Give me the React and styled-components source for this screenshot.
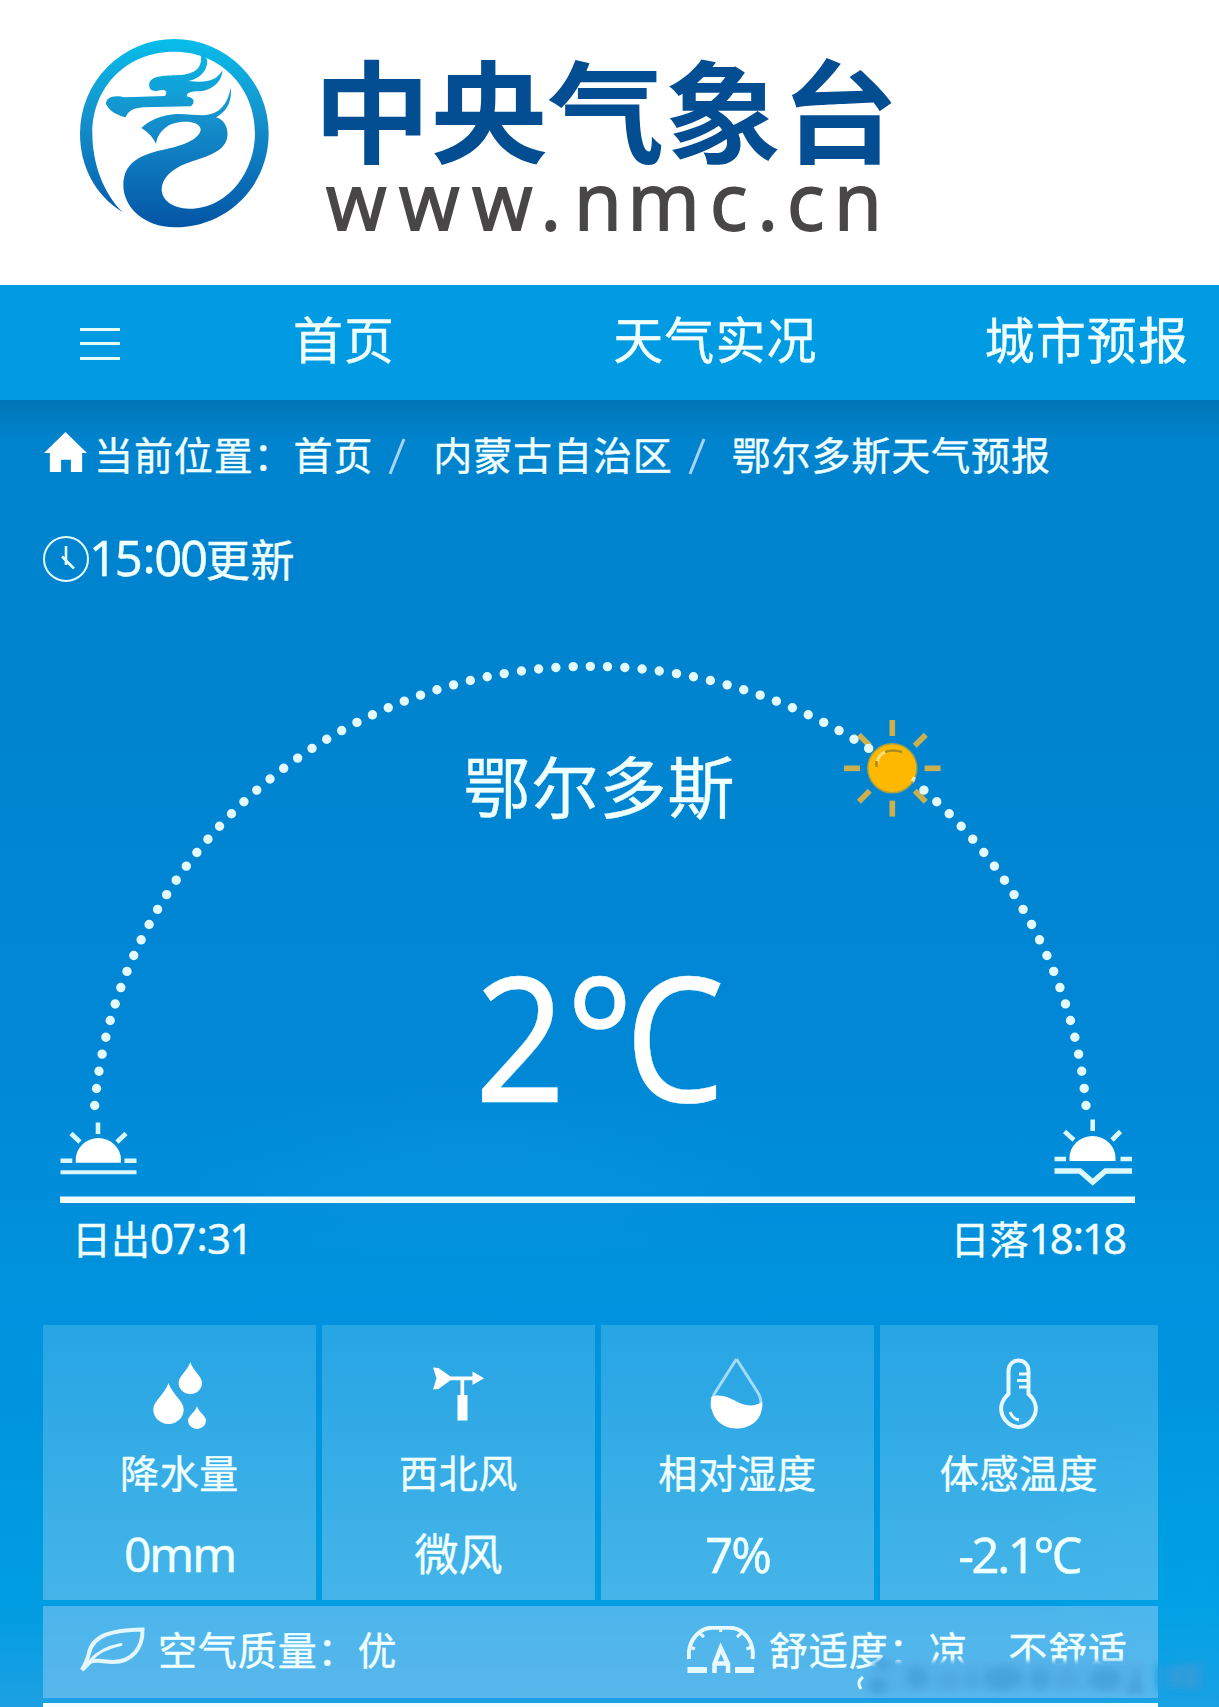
import React from 'react';
import styled, { createGlobalStyle } from 'styled-components';

const GlobalStyle = createGlobalStyle`
  * {
    box-sizing: border-box;
  }

  body {
    margin: 0;
    background: #fff;
    font-family: 'Noto Sans', 'Noto Sans CJK SC', sans-serif;
    color: #f0ffff;
    -webkit-text-stroke: 0.4px #f0ffff;
  }
`;

const Page = styled.div`
  width: 1219px;
  height: 1707px;
  overflow: hidden;
`;

const Header = styled.header`
  height: 285px;
  background: #fff;
`;

const Nav = styled.nav`
  display: flex;
  align-items: center;
  height: 115px;
  padding: 0 0 6px 80px;
  background: #009be2;
`;

const Burger = styled.div`
  display: flex;
  flex: none;
  flex-direction: column;
  gap: 11.5px;
  width: 40px;
  margin: 8px 173px 0 0;
`;

const BurgerLine = styled.div`
  height: 3px;
  background: #e6fdff;
`;

const NavItem = styled.a`
  margin-right: ${({ gap }) => gap || 0}px;
  font-size: 50px;
  line-height: 60px;
  letter-spacing: 1.1px;
  white-space: nowrap;
`;

const Main = styled.main`
  height: 1307px;
  padding-top: 34px;
  background:
    linear-gradient(rgba(0, 100, 150, 0.42), rgba(0, 110, 160, 0) 40px),
    radial-gradient(ellipse 300px 90px at 480px 770px, rgba(30, 160, 230, 0.2), rgba(30, 160, 230, 0)),
    radial-gradient(ellipse 190px 200px at 1200px 1180px, rgba(0, 175, 240, 0.25), rgba(0, 175, 240, 0)),
    linear-gradient(#0083cd 0, #0084d0 320px, #0087d6 640px, #0091dd 860px, #0094df 1000px, #009de2 1200px, #1ca0e3 1307px);
`;

const Crumbs = styled.div`
  display: flex;
  align-items: center;
  height: 42px;
  padding-left: 44px;
  font-size: 39px;
  line-height: 42px;
  letter-spacing: 0.9px;
  white-space: nowrap;
`;

const HomeIcon = styled.svg`
  margin: -6px 7px 0 0;
`;

const Slash = styled.svg`
  margin: 3px ${({ after }) => after}px 0 15px;
`;

const Updated = styled.div`
  display: flex;
  align-items: center;
  height: 46px;
  margin: 60px 0 0 43px;
  font-size: 44px;
  line-height: 46px;
  letter-spacing: 0.8px;
  white-space: nowrap;
`;

const UpdatedText = styled.div`
  margin: -5px 0 0 -1px;
`;

const Num = styled.span`
  font-size: ${({ size }) => size}px;
  letter-spacing: ${({ tight }) => tight}px;
`;

const Colon = styled.span`
  margin: 0 1px 0 2px;
  vertical-align: 0.08em;
`;

const Stage = styled.section`
  display: grid;
  height: 636px;

  > * {
    grid-area: 1 / 1;
  }
`;

const Current = styled.div`
  display: flex;
  flex-direction: column;
  align-items: center;
  padding: 165px 20px 0 0;
`;

const City = styled.div`
  font-size: 67px;
  line-height: 80px;
  letter-spacing: 1px;
`;

const Temperature = styled.div`
  margin-top: 113px;
  font-size: 174px;
  line-height: 190px;
  color: #fff;
  transform: scaleX(0.915);
`;

const SunTimes = styled.div`
  display: flex;
  justify-content: space-between;
  height: 44px;
  padding: 0 95px 0 72px;
  margin-top: -5px;
  font-size: 39px;
  line-height: 44px;
`;

const Details = styled.section`
  display: grid;
  grid-template-columns: 273px 273px 273px 278px;
  grid-template-rows: 275px 92px 5px;
  gap: 5.5px 6px;
  width: 1115px;
  margin: 68px 0 0 43px;
`;

const Card = styled.div`
  display: flex;
  flex-direction: column;
  align-items: center;
  padding-top: 29px;
  background: linear-gradient(rgba(120, 205, 240, 0.32), rgba(150, 208, 240, 0.46));
`;

const CardIcon = styled.svg`
  display: block;
`;

const Label = styled.div`
  margin-top: 19px;
  font-size: 39px;
  line-height: 44px;
  letter-spacing: 0.6px;
`;

const Value = styled.div`
  display: flex;
  align-items: center;
  height: 50px;
  margin-top: 34px;
  font-size: ${({ size }) => size || 49}px;
  line-height: 50px;
  letter-spacing: ${({ tight }) => tight || 0}px;
`;

const Summary = styled.div`
  grid-column: 1 / -1;
  display: flex;
  align-items: center;
  padding: 0 30px 4px 36px;
  background: rgba(150, 206, 244, 0.5);
  font-size: 39px;
  line-height: 44px;
  letter-spacing: 0.9px;
  white-space: pre;
`;

const SummaryIcon = styled.svg`
  margin-right: ${({ after }) => after || 14}px;
`;

const Spacer = styled.div`
  flex: 1;
`;

const NextPanel = styled.div`
  grid-column: 1 / -1;
  background: #f4fdff;
`;

// blurred signature lying over the bottom right corner
const Smudge = styled.svg`
  position: absolute;
  left: 840px;
  top: 1640px;
`;

const LogoName = styled.text`
  font-family: 'Noto Sans CJK SC', sans-serif;
  font-weight: 700;
  font-size: 117px;
  fill: #034e93;
`;

const LogoUrl = styled.text`
  font-family: 'Open Sans', 'Noto Sans', sans-serif;
  font-weight: 500;
  font-size: 78px;
  fill: #484647;
  stroke: #484647;
  stroke-width: 1.8px;
`;

const Logo = () => (
  <svg width="1219" height="285" viewBox="0 0 1219 285">
    <defs>
      <linearGradient id="dragon" gradientUnits="userSpaceOnUse" x1="0" y1="60" x2="0" y2="620">
        <stop offset="0" stopColor="#08bdea" />
        <stop offset="0.4" stopColor="#1593cd" />
        <stop offset="0.7" stopColor="#0c74bb" />
        <stop offset="1" stopColor="#0455a5" />
      </linearGradient>
    </defs>
    <g transform="translate(60 20) scale(0.33333)" fill="url(#dragon)">
      <path d="M188 577C105 525 60 440 60 340A283 283 0 0 1 626 340C626 500 500 622 345 622C250 622 190 560 190 496C190 425 245 402 320 387C385 374 422 350 422 328C418 298 350 300 320 320C300 335 292 350 288 371C278 350 262 335 244 324C270 298 310 284 350 282C390 281 425 290 450 283C490 272 505 240 512 203C517 245 500 275 468 292C495 300 505 325 502 350C495 400 430 410 380 430C330 450 305 478 305 509C308 550 350 567 400 566C510 560 585 450 585 340C585 200 480 95 343 95C200 95 97 200 97 340C97 430 130 520 188 577Z" />
      <path d="M422 100C428 140 412 158 370 164C330 168 285 162 269 185C262 208 278 217 300 211C318 208 324 216 315 228L195 232C160 223 138 232 138 252C150 275 170 285 197 292C205 272 220 265 250 262L392 259C406 249 405 233 380 229C382 213 400 215 428 213C465 205 487 180 487 150C470 182 440 190 385 183C420 176 442 152 442 122C440 112 430 105 422 100Z" />
    </g>
    <LogoName transform="translate(313.500 154.500) scale(1 0.955)">中央气象台</LogoName>
    <LogoUrl x="326 399 472 540.500 574 627.500 710 757.500 787 834" y="230">
      www.nmc.cn
    </LogoUrl>
  </svg>
);

const Home = () => (
  <HomeIcon width="43" height="42" viewBox="0 0 44 42" fill="#fff">
    <path d="M22 0.500L44 22H39V41.500H27.500V29H17.500V41.500H6V22H0Z" />
  </HomeIcon>
);

const Divider = ({ after }) => (
  <Slash after={after} width="18" height="37" viewBox="0 0 18 37">
    <path d="M2 36L16 1" stroke="#a9d3f5" strokeWidth="3" />
  </Slash>
);

const Clock = () => (
  <svg width="47" height="47" viewBox="0 0 47 47" fill="none" stroke="#e6fdff" strokeWidth="2">
    <circle cx="23" cy="23" r="22" />
    <path d="M23 10V29M19 20.500L31 32.500" strokeWidth="2.600" />
  </svg>
);

const rays = [0, 45, 90, 135, 180, 225, 270, 315];

const SunArc = () => (
  <svg width="1219" height="636" viewBox="0 582 1219 636" fill="none">
    <g stroke="#cbb04d" strokeWidth="5.600">
      {rays.map(angle => (
        <path
          key={angle}
          d={angle % 90 ? 'M892.300 736.500V721' : 'M892.300 736V720'}
          transform={`rotate(${angle} 892.300 768.300)`}
        />
      ))}
    </g>
    <path
      d="M94.700 1105.500A497.400 479.300 0 0 1 1086 1105.500"
      stroke="#e3fbff"
      strokeWidth="9.400"
      strokeLinecap="round"
      pathLength="84.001"
      strokeDasharray="0 1"
    />
    <circle cx="892.300" cy="768.300" r="24.500" fill="#fdb900" stroke="#a79f45" strokeWidth="1.500" />
    <path d="M877 763C878 757 881 753 886 752" stroke="#ffdf7e" strokeWidth="3" />
    <path d="M885 752Q893 749 902 752M876.500 767V761" stroke="#a98a1c" strokeWidth="2.500" />
    <path d="M912 781L914.500 777" stroke="#ffe9a8" strokeWidth="3" />
    <g stroke="#dcf8ff" strokeWidth="4.600">
      <path d="M75.700 1162.700V1160A22.600 22 0 0 1 121 1160V1162.700Z" fill="#fff" stroke="none" />
      <path d="M98 1122.500V1134M71 1133.500L80 1142M126 1133.500L117 1142M60.500 1160.700H72.300M124.500 1160.700H136.500" />
      <path d="M60.500 1172.300H136.500" strokeWidth="4" />
      <path d="M1069.500 1161V1158A23 22 0 0 1 1115.500 1158V1161Z" fill="#fff" stroke="none" />
      <path d="M1092.700 1119.500V1131M1064.500 1131.500L1074 1140M1120.500 1131.500L1112 1140M1054.500 1159H1066M1120.500 1159H1132" />
      <path d="M1054.500 1171H1080L1092.700 1182L1105.500 1171H1132" strokeWidth="5.500" />
    </g>
    <path d="M60 1199.700H1135" stroke="#f0fdff" strokeWidth="6.400" />
  </svg>
);

const Drops = () => (
  <CardIcon width="90" height="78" viewBox="135 1354 90 78" fill="#fff">
    <path d="M190.300 1362C193 1371 202 1376 202 1383A11.700 11 0 0 1 178.600 1383C178.600 1376 187.500 1371 190.300 1362Z" />
    <path d="M168.500 1383C172 1394 183.700 1401 183.700 1409.500A15.200 14.500 0 0 1 153.300 1409.500C153.300 1401 165 1394 168.500 1383Z" />
    <path d="M197 1406C198.500 1412 206 1416 206 1420.500A9 8.500 0 0 1 188 1420.500C188 1416 195.500 1412 197 1406Z" />
  </CardIcon>
);

const Vane = () => (
  <CardIcon width="90" height="78" viewBox="413.500 1354 90 78" fill="#fff">
    <path d="M432.500 1367.500L438 1368L450 1376.500H472V1371.500L483.500 1378.300L472 1385V1380.300H463.700V1395H467V1420.500H457V1395H460V1380.300H450L438 1389L432.500 1389.500L436 1378.300Z" />
  </CardIcon>
);

const Humidity = () => (
  <CardIcon width="90" height="78" viewBox="692.500 1354 90 78">
    <path
      d="M736 1359L715 1392C711 1398 711 1404 712 1409M736 1359L757 1392C761 1398 761 1404 760 1409"
      fill="none"
      stroke="#a5dbf8"
      strokeWidth="3"
    />
    <path d="M711 1397C720 1393 729 1398 737 1402C745 1406 754 1407 761.500 1402C763 1418 752 1428.500 736 1428.500C720 1428.500 708 1416 711 1397Z" fill="#fff" />
  </CardIcon>
);

const Thermometer = () => (
  <CardIcon width="90" height="78" viewBox="974 1354 90 78" fill="none" stroke="#e8f9ff" strokeWidth="4">
    <path d="M1008.500 1394V1371C1008.500 1357 1028.500 1357 1028.500 1371V1394C1044 1408 1032 1427 1018.500 1427C1005 1427 993 1408 1008.500 1394Z" />
    <path d="M1019 1374H1027M1017 1380.500H1027M1019 1387H1027" strokeWidth="3" />
    <path d="M1010 1412Q1013 1419 1019 1420" strokeWidth="3" />
  </CardIcon>
);

const Leaf = () => (
  <SummaryIcon after={13} width="66" height="46" viewBox="79 1629 66 46" fill="none" stroke="#e4f7ff" strokeWidth="4" strokeLinecap="round">
    <path d="M82 1672C86 1664 88 1661 89 1655C93 1637 112 1632 142.500 1631.500C143 1650 132 1664 113 1664C104 1664 96 1661 90 1664L82 1672Z" />
    <path d="M90 1663C98 1653 108 1649 121 1646.500" strokeWidth="3" />
  </SummaryIcon>
);

const Gauge = () => (
  <SummaryIcon width="68" height="48" viewBox="688 1627 68 48" fill="none" stroke="#e8f9ff" strokeWidth="4">
    <path d="M690 1660C688 1641 701 1629 713 1628.700H731C744 1629 756 1642 753.500 1660" />
    <path d="M691 1648L696 1650M701 1634.500L705 1638M721.700 1628V1633M742 1634.500L738 1638M752.500 1648L747.500 1650" strokeWidth="3" />
    <path d="M715.500 1674V1665L721.700 1649L729 1665V1674M716 1664.500H728" strokeWidth="4.500" />
    <path d="M688.500 1671H708M736 1671H755" strokeWidth="6" />
  </SummaryIcon>
);

const Signature = () => (
  <Smudge width="379" height="62" viewBox="840 1640 379 62">
    <defs>
      <filter id="soft" x="-20%" y="-40%" width="140%" height="180%">
        <feGaussianBlur stdDeviation="2" />
      </filter>
      <filter id="softer" x="-20%" y="-40%" width="140%" height="180%">
        <feGaussianBlur stdDeviation="3.500" />
      </filter>
    </defs>
    <path d="M876 1661H1144V1692H866V1676Z" fill="#55b1e8" filter="url(#soft)" />
    <path d="M1156 1666L1206 1660V1690H1156Z" fill="#1c9fe2" filter="url(#softer)" />
    <g fill="#3f9bd4" filter="url(#softer)" opacity="0.6">
      <circle cx="917" cy="1677" r="11" />
      <circle cx="878" cy="1686" r="9" />
      <ellipse cx="882" cy="1664" rx="9" ry="5" />
      <ellipse cx="948" cy="1680" rx="12" ry="8" opacity="0.5" />
      <ellipse cx="972" cy="1679" rx="8" ry="8" opacity="0.6" />
      <ellipse cx="1003" cy="1678" rx="20" ry="12" />
      <ellipse cx="1040" cy="1678" rx="10" ry="11" opacity="0.9" />
      <ellipse cx="1066" cy="1678" rx="12" ry="9" opacity="0.5" />
      <ellipse cx="1105" cy="1679" rx="16" ry="11" />
      <path d="M1136 1667L1145 1694H1126Z" />
      <rect x="1170" y="1668" width="12" height="18" />
      <rect x="1184" y="1666" width="14" height="22" />
    </g>
    <path d="M863 1677Q856 1682 861 1689" fill="none" stroke="#e8fbff" strokeWidth="3" />
  </Smudge>
);

export default () => (
  <Page>
    <GlobalStyle />
    <Header>
      <Logo />
    </Header>
    <Nav>
      <Burger>
        <BurgerLine />
        <BurgerLine />
        <BurgerLine />
      </Burger>
      <NavItem gap={218}>首页</NavItem>
      <NavItem gap={167}>天气实况</NavItem>
      <NavItem>城市预报</NavItem>
    </Nav>
    <Main>
      <Crumbs>
        <Home />
        当前位置：首页
        <Divider after={27} />
        内蒙古自治区
        <Divider after={26} />
        鄂尔多斯天气预报
      </Crumbs>
      <Updated>
        <Clock />
        <UpdatedText>
          <Num size={49} tight={-2.3}>15<Colon>:</Colon>00</Num>更新
        </UpdatedText>
      </Updated>
      <Stage>
        <SunArc />
        <Current>
          <City>鄂尔多斯</City>
          <Temperature>2℃</Temperature>
        </Current>
      </Stage>
      <SunTimes>
        <div>
          日出<Num size={42} tight={-1.8}>07<Colon>:</Colon>31</Num>
        </div>
        <div>
          日落<Num size={42} tight={-3}>18<Colon>:</Colon>18</Num>
        </div>
      </SunTimes>
      <Details>
        <Card>
          <Drops />
          <Label>降水量</Label>
          <Value size={48} tight={-2}>0mm</Value>
        </Card>
        <Card>
          <Vane />
          <Label>西北风</Label>
          <Value size={44}>微风</Value>
        </Card>
        <Card>
          <Humidity />
          <Label>相对湿度</Label>
          <Value tight={-2}>7%</Value>
        </Card>
        <Card>
          <Thermometer />
          <Label>体感温度</Label>
          <Value tight={-2.4}>-2.1℃</Value>
        </Card>
        <Summary>
          <Leaf />
          空气质量：优
          <Spacer />
          <Gauge />
          舒适度：凉　不舒适
        </Summary>
        <NextPanel />
      </Details>
    </Main>
    <Signature />
  </Page>
);
